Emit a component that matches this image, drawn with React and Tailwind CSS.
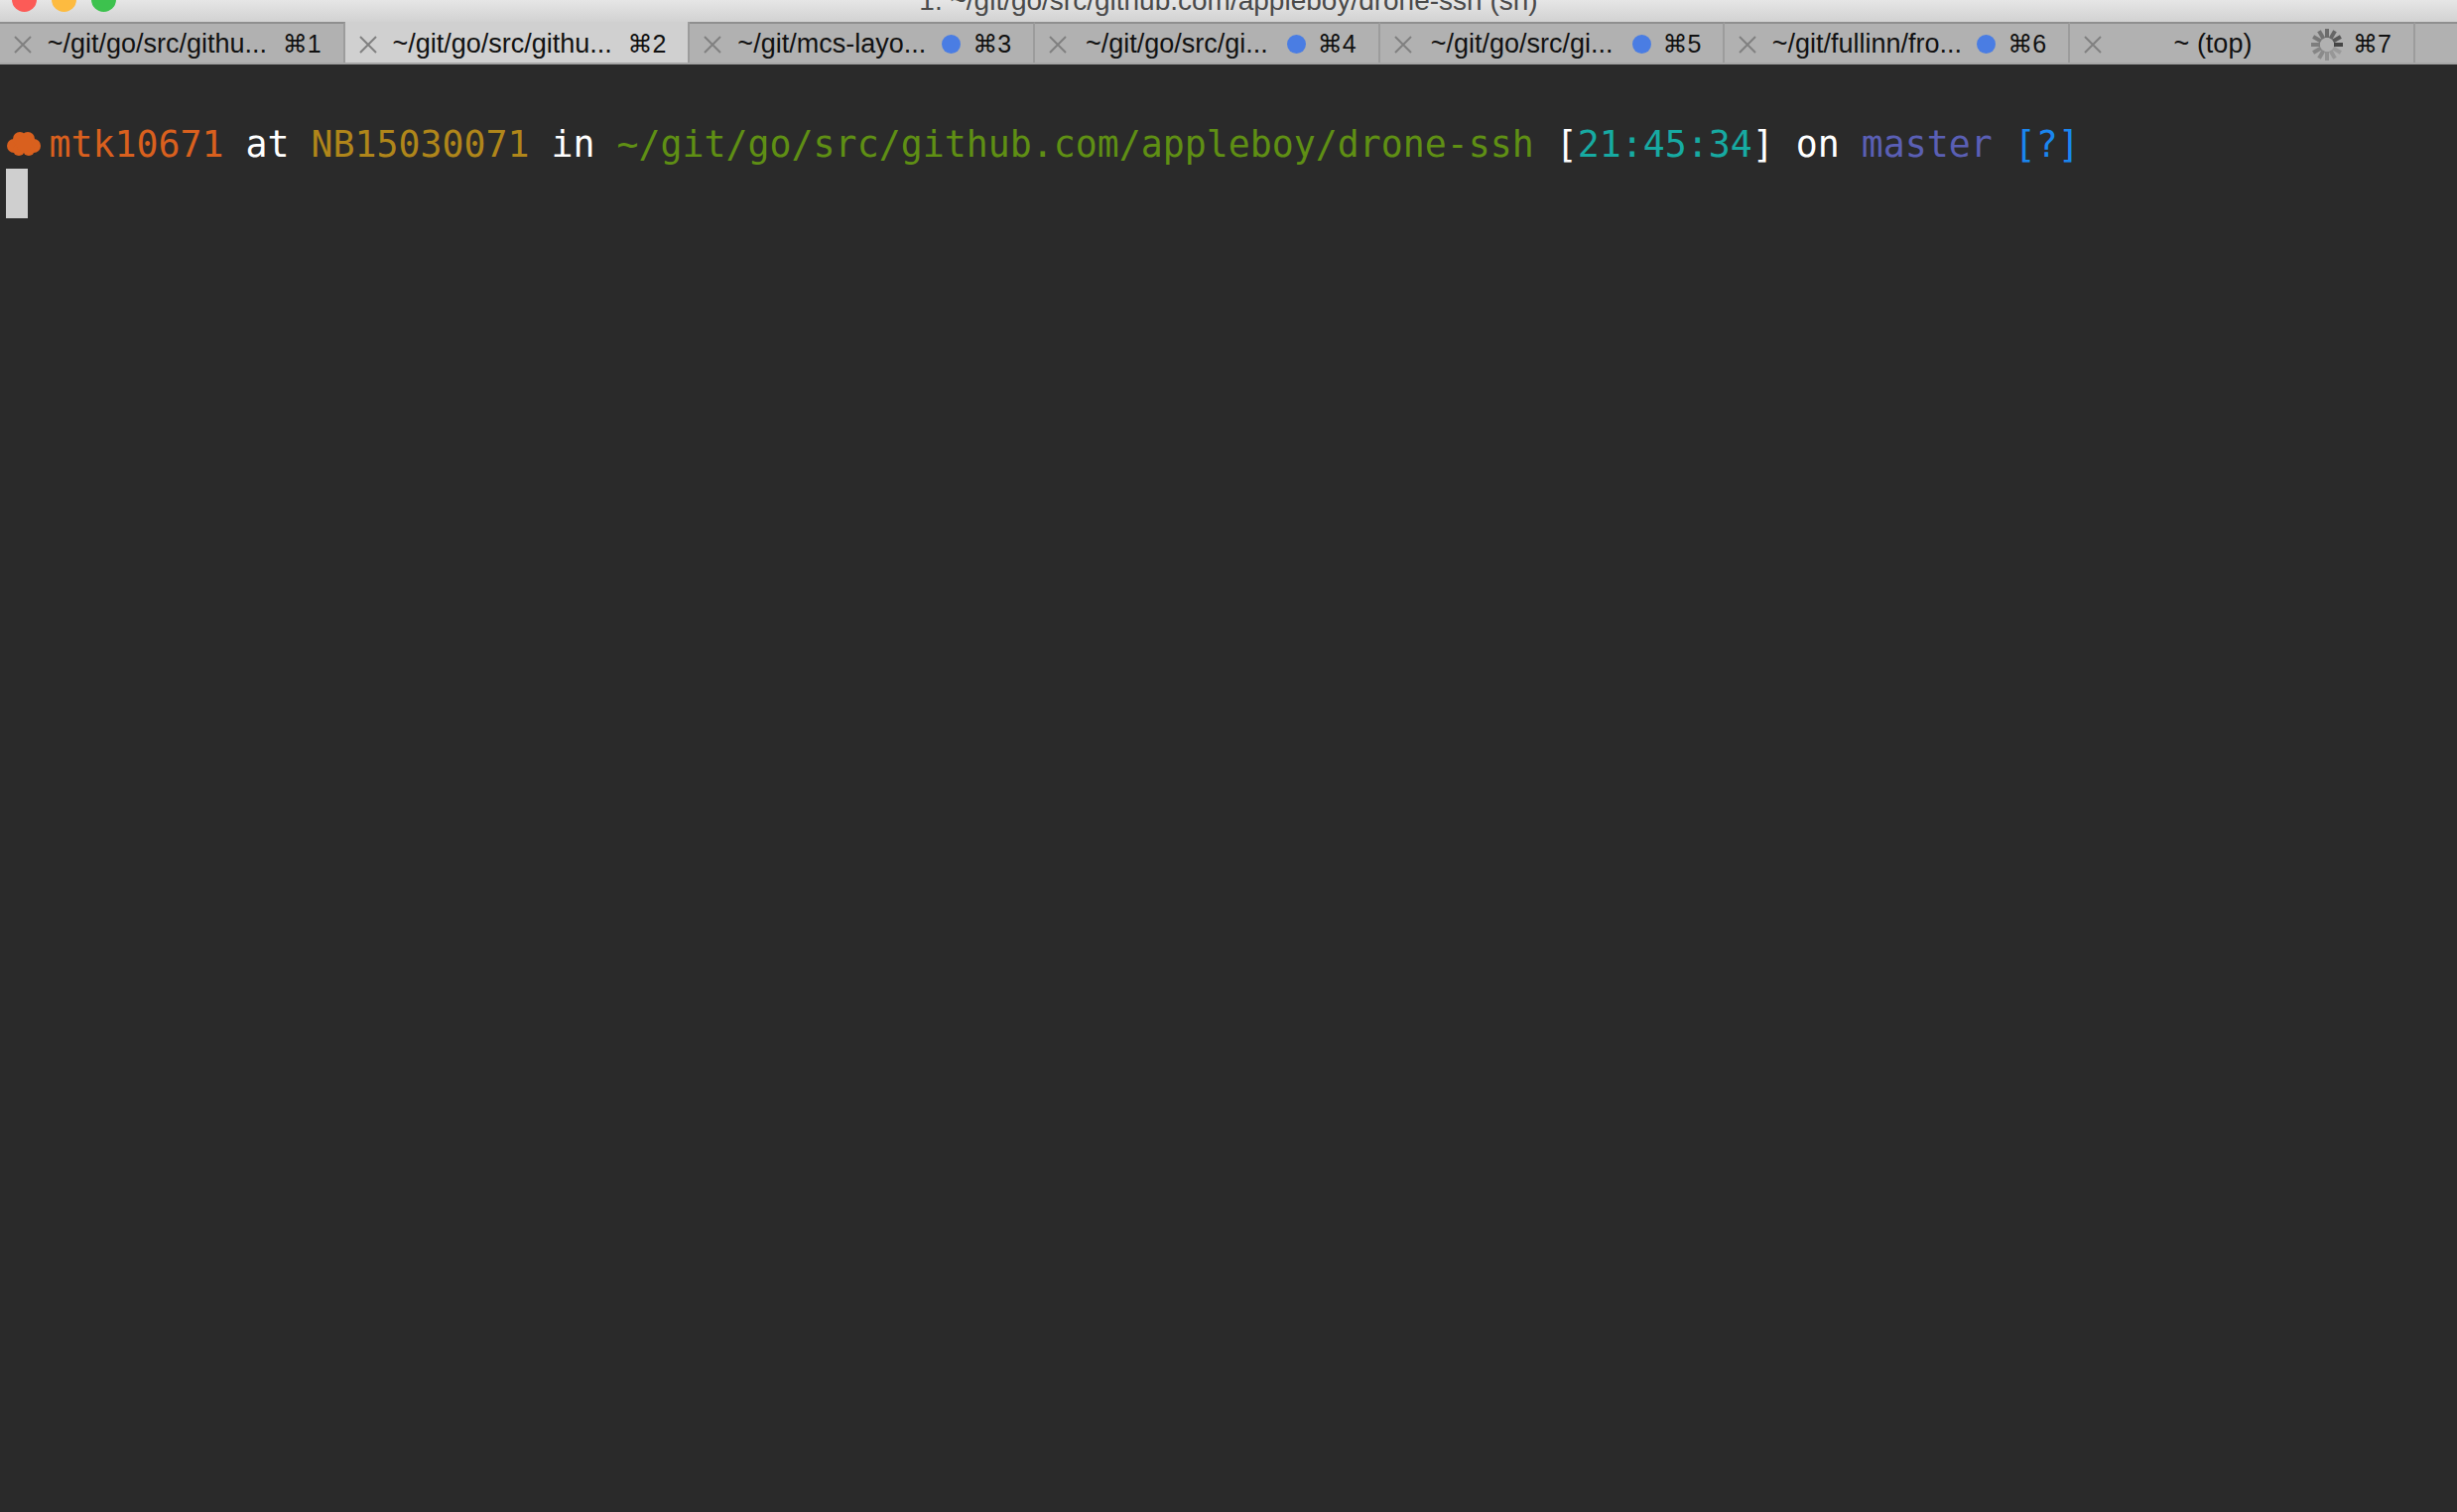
import React from 'react';

const tabs = [
  { title: '~/git/go/src/githu...', key: '⌘1' },
  { title: '~/git/go/src/githu...', key: '⌘2', active: true },
  { title: '~/git/mcs-layo...', key: '⌘3', dot: true },
  { title: '~/git/go/src/gi...', key: '⌘4', dot: true },
  { title: '~/git/go/src/gi...', key: '⌘5', dot: true },
  { title: '~/git/fullinn/fro...', key: '⌘6', dot: true },
  { title: '~ (top)', key: '⌘7', spinner: true },
];

const Spinner = () => (
  <svg width="34" height="34" viewBox="0 0 34 34" className="mr-[9px] shrink-0">
    {Array.from({ length: 12 }).map((_, i) => (
      <rect
        key={i}
        x="15"
        y="1"
        width="4"
        height="9"
        fill="#333"
        opacity={[0.85, 0.18, 0.2, 0.25, 0.3, 0.35, 0.4, 0.45, 0.5, 0.55, 0.6, 0.7][(i + 9) % 12]}
        transform={`rotate(${i * 30} 17 17)`}
      />
    ))}
  </svg>
);

const Tab = ({ tab }) => (
  <div
    className={`flex h-full w-[347.7px] shrink-0 items-center border-r-2 border-[#9c9c9c] pl-[14px] pr-[22px] ${
      tab.active ? 'bg-[#d0d0d0] pt-[4px]' : 'border-t-2 border-t-[#8f8f8f] bg-[#b1b1b1] pt-[2px]'
    }`}
  >
    <svg width="18" height="18" viewBox="0 0 18 18" className="shrink-0" stroke="#808080" strokeWidth="2" fill="none">
      <path d="M1 1 L17 17 M17 1 L1 17" />
    </svg>
    <div className={`min-w-0 flex-1 whitespace-nowrap text-center text-[27px] text-[#111] ${tab.spinner ? 'pl-[14px]' : ''}`}>
      {tab.title}
    </div>
    {tab.dot && <div className="mr-[12px] h-[19px] w-[19px] shrink-0 rounded-full bg-[#4a7de3]" />}
    {tab.spinner && <Spinner />}
    <div className="shrink-0 whitespace-nowrap text-[25px] text-[#111]">{tab.key}</div>
  </div>
);

const Cloud = () => (
  <svg width="34" height="24" viewBox="0 0 34 24" fill="#d9601e" className="shrink-0">
    <circle cx="7" cy="14" r="7" />
    <circle cx="27" cy="14" r="7" />
    <circle cx="13" cy="7" r="7" />
    <circle cx="21" cy="7" r="7" />
    <circle cx="12" cy="18" r="6" />
    <circle cx="22" cy="18" r="6" />
    <circle cx="17" cy="12" r="8" />
  </svg>
);

export default function App() {
  return (
    <div className="flex h-[1524px] w-[2476px] flex-col overflow-hidden bg-[#2a2a2a] font-['Liberation_Sans','DejaVu_Sans',sans-serif] text-[24px]">
      {/* Title bar, cut off at the top of the capture */}
      <div className="relative flex h-[22px] shrink-0 items-end justify-center overflow-hidden bg-linear-to-b from-[#e6e6e6] to-[#d2d2d2]">
        <div className="absolute left-[12px] top-[-13px] flex gap-[15px]">
          <div className="h-[25px] w-[25px] rounded-full bg-[#fc5b57]" />
          <div className="h-[25px] w-[25px] rounded-full bg-[#fdbb40]" />
          <div className="h-[25px] w-[25px] rounded-full bg-[#3dc24e]" />
        </div>
        <div className="mb-[7px] whitespace-nowrap text-[28px] leading-[28px] text-[#4a4a4a]">
          1. ~/git/go/src/github.com/appleboy/drone-ssh (sh)
        </div>
      </div>

      {/* Tabs */}
      <div className="flex h-[43px] shrink-0 border-b-2 border-[#a6a6a6] bg-[#b1b1b1]">
        {tabs.map((tab) => (
          <Tab key={tab.key} tab={tab} />
        ))}
        <div className="flex-1 border-t-2 border-[#8f8f8f]" />
      </div>

      {/* Terminal */}
      <div className="flex-1 pl-[5px] pt-[55px] font-['DejaVu_Sans_Mono',monospace] text-[36.56px] leading-[50px] text-white">
        <div className="flex h-[50px] items-center whitespace-pre">
          <div className="flex w-[44.5px] shrink-0 items-center pl-[2px]">
            <Cloud />
          </div>
          <span className="pt-[2px]">
            <span className="text-[#d9601e]">mtk10671</span>
            {' at '}
            <span className="text-[#b0861a]">NB15030071</span>
            {' in '}
            <span className="text-[#5f8f14]">~/git/go/src/github.com/appleboy/drone-ssh</span>
            {' ['}
            <span className="text-[#17aaa2]">21:45:34</span>
            {'] on '}
            <span className="text-[#5a5fb4]">master</span>{' '}
            <span className="text-[#1a86f0]">[?]</span>
          </span>
        </div>
        <div className="ml-px h-[50px] w-[22px] bg-[#cfcfcf]" />
      </div>
    </div>
  );
}
